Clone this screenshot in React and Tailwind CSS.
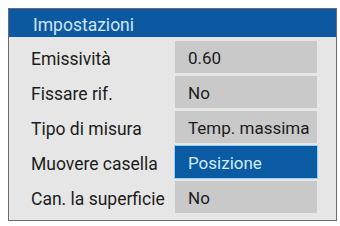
import React from 'react';

const rows = [
    { label: 'Emissività', value: '0.60' },
    { label: 'Fissare rif.', value: 'No' },
    { label: 'Tipo di misura', value: 'Temp. massima' },
    { label: 'Muovere casella', value: 'Posizione', active: true },
    { label: 'Can. la superficie', value: 'No' },
];

const App = () => {
    return (
        <div className="w-[340px] h-[226px] bg-white p-2 font-['Roboto',sans-serif]">
            <div className="w-[329px] h-[213px] border border-[#6b6b6b] bg-[#e6e6e6] flex flex-col">
                {/* Header */}
                <div className="h-[29px] bg-[#0d59a1] flex items-center pl-[24px] pt-[5px] text-[17.5px] text-[#cfe6fa] border-b border-[#e2e8ee]">
                    Impostazioni
                </div>

                {/* Rows */}
                <div className="flex flex-col gap-[3px] pt-[3px]">
                    {rows.map((row) => (
                        <div key={row.label} className="flex items-center h-[32px]">
                            <div className="w-[166px] pl-[22px] pt-[4px] text-[17.5px] text-[#1c1c1c] whitespace-nowrap">
                                {row.label}
                            </div>
                            <div
                                className={
                                    row.active
                                        ? 'w-[142px] h-full flex items-center pl-[13px] pt-[4px] text-[17px] whitespace-nowrap bg-[#0b5ba4] text-[#d4ecfb] shadow-[0_0_0_1px_#8fd0f5]'
                                        : 'w-[142px] h-full flex items-center pl-[13px] pt-[4px] text-[17px] whitespace-nowrap bg-[#c9c9c9] text-[#1c1c1c]'
                                }
                            >
                                {row.value}
                            </div>
                        </div>
                    ))}
                </div>
            </div>
        </div>
    );
};

export default App;
